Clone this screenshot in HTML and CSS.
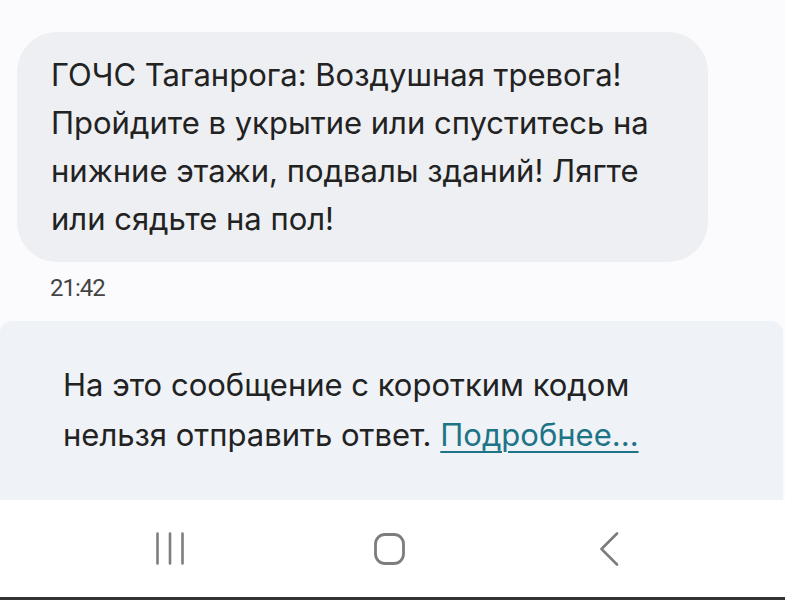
FILE: index.html
```html
<html>
  <head>
    <meta charset="utf-8" />
    <link rel="stylesheet" href="styles.css">
    <title>Сообщения</title>
  </head>
  <body>
    <div id="chat">
      <div class="bubble">
        ГОЧС Таганрога: Воздушная тревога! Пройдите в укрытие или спуститесь на
        нижние этажи, подвалы зданий! Лягте или сядьте на пол!
      </div>
      <div class="time">21:42</div>
    </div>
    <div class="notice">
      <p>
        На это сообщение с коротким кодом<br />
        нельзя отправить ответ. <a href="#">Подробнее...</a>
      </p>
    </div>
    <div id="navbar">
      <div class="nav-btn">
        <svg width="30" height="33" viewBox="0 0 30 33">
          <path d="M2.5 1.5v30M15 1.5v30M27.5 1.5v30" stroke="#7d7d7d" stroke-width="2.6" stroke-linecap="round" fill="none" />
        </svg>
      </div>
      <div class="nav-btn">
        <svg width="31" height="32" viewBox="0 0 31 32">
          <rect x="1.5" y="1.5" width="28" height="29" rx="9.5" stroke="#7d7d7d" stroke-width="2.8" fill="none" />
        </svg>
      </div>
      <div class="nav-btn">
        <svg width="21" height="34" viewBox="0 0 21 34">
          <path d="M18 1.5L2.5 17 18 32.5" stroke="#7d7d7d" stroke-width="2.6" stroke-linecap="round" stroke-linejoin="round" fill="none" />
        </svg>
      </div>
    </div>
  </body>
</html>
```

FILE: styles.css
```css
body {
  margin: 0;
  font-family: Inter, Roboto, sans-serif;
  background-color: #fbfbfd;
  color: #222222;
}
#chat {
  padding-top: 32px;
}
.bubble {
  width: 623px;
  margin-left: 17px;
  padding: 19px 34px 19px 34px;
  background-color: #eeeff2;
  border-radius: 40px;
  font-size: 31px;
  line-height: 48px;
}
.time {
  margin: 14px 0 0 50px;
  font-family: Roboto, sans-serif;
  font-size: 24px;
  line-height: 24px;
  letter-spacing: -1px;
  color: #444444;
}
.notice {
  margin: 21px 2px 0 0;
  padding: 39px 0 40px 63px;
  background-color: #eff2f6;
  border-radius: 12px 12px 0 0;
}
.notice p {
  margin: 0;
  font-size: 31px;
  line-height: 50px;
}
.notice a {
  color: #1d7487;
  text-decoration: underline;
  text-underline-offset: 5px;
  text-decoration-thickness: 2px;
}
#navbar {
  height: 97px;
  padding-right: 6px;
  background-color: #ffffff;
  border-bottom: 3px solid #333333;
  display: flex;
  justify-content: center;
  align-items: center;
  gap: 160px;
}
.nav-btn {
  width: 60px;
  display: flex;
  justify-content: center;
  align-items: center;
}
```
